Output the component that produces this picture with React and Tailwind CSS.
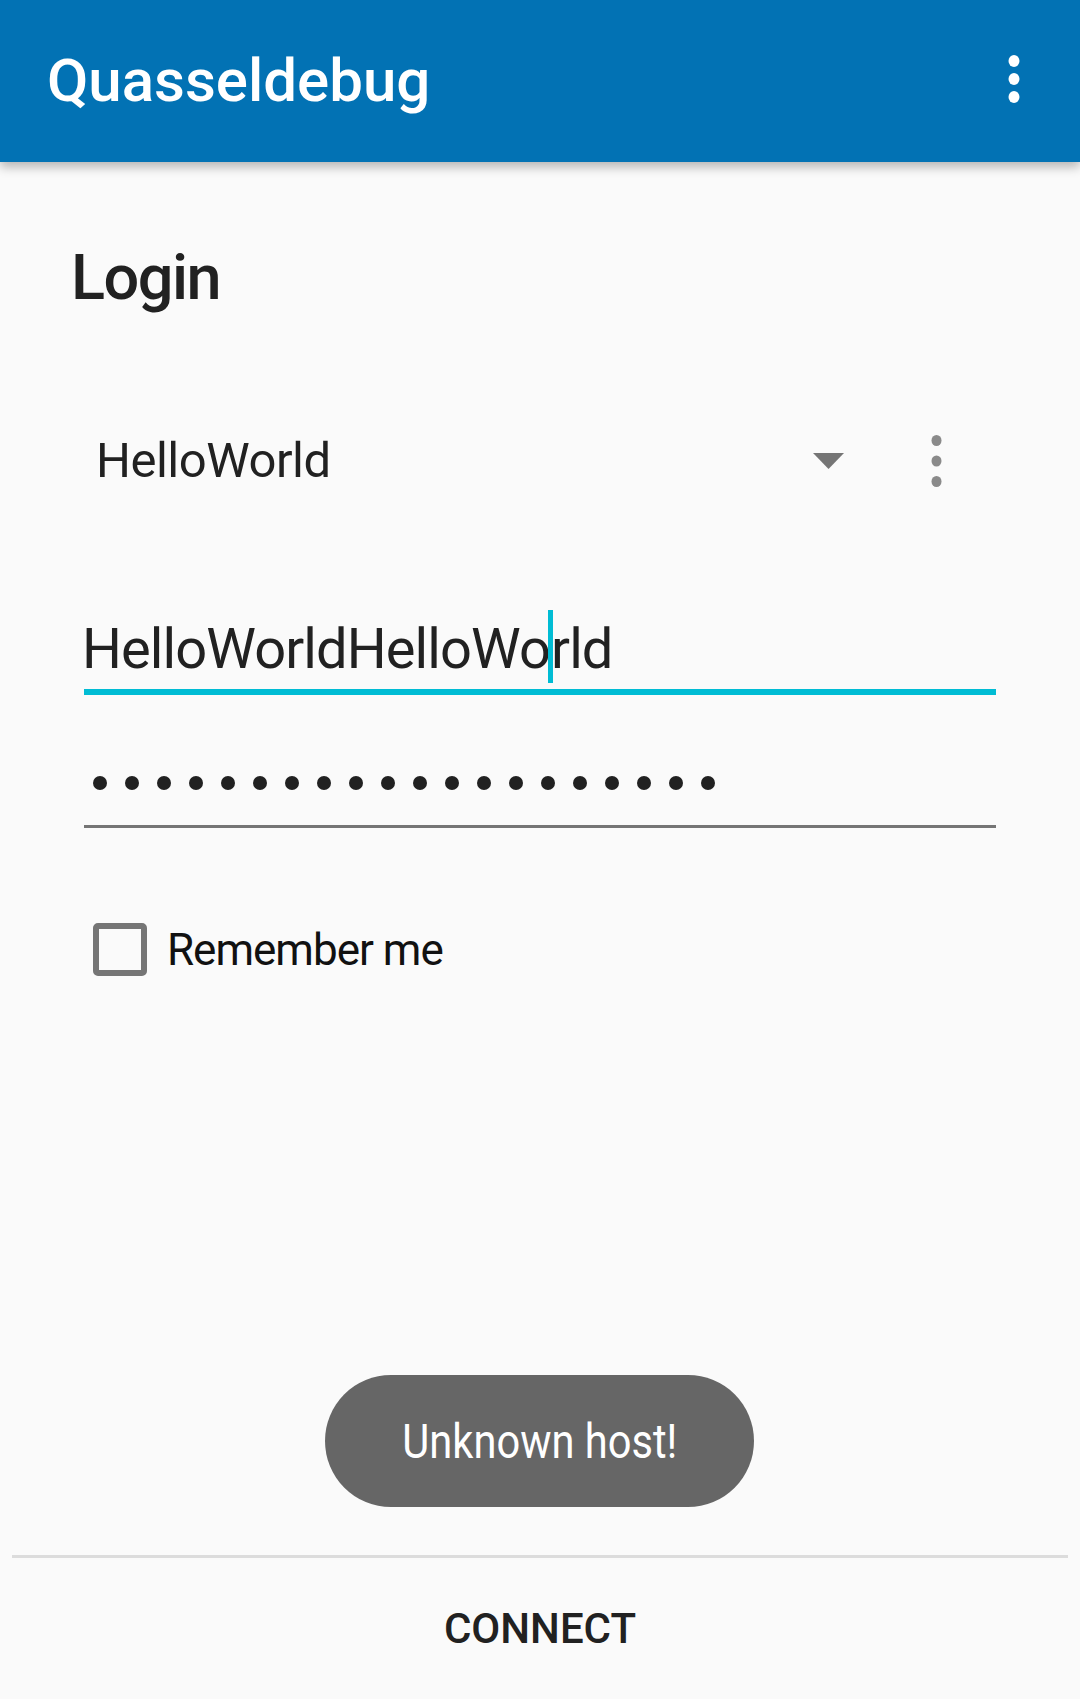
import React from "react";

function Kebab({ color, gap = 18, r = 6 }) {
  const h = r * 2 + gap * 2;
  return (
    <svg width={r * 2} height={h} viewBox={`0 0 ${r * 2} ${h}`} fill={color}>
      <ellipse cx={r} cy={r} rx={r - 0.5} ry={r} />
      <ellipse cx={r} cy={r + gap} rx={r - 0.5} ry={r} />
      <ellipse cx={r} cy={r + gap * 2} rx={r - 0.5} ry={r} />
    </svg>
  );
}

export default function App() {
  const dots = Array.from({ length: 20 });

  return (
    <div className="relative h-[1699px] w-[1080px] flex flex-col bg-[#fafafa] font-['Roboto','Liberation_Sans',sans-serif] overflow-hidden">
      {/* TOOLBAR */}
      <header className="relative z-10 h-[162px] shrink-0 flex items-center justify-between bg-[#0272b4] pl-[47px] pr-[60px] shadow-[0_5px_10px_rgba(0,0,0,0.28)]">
        <h1 className="text-[60px] leading-[162px] font-medium text-white">Quasseldebug</h1>
        <div className="-mt-[4px]">
          <Kebab color="#ffffff" />
        </div>
      </header>

      {/* LOGIN TITLE */}
      <h2 className="mt-[76px] h-[80px] pl-[71px] text-[63px] leading-[80px] font-medium tracking-[-1.5px] text-[#212121]">
        Login
      </h2>

      {/* ACCOUNT SPINNER */}
      <div className="mt-[93px] h-[100px] flex items-center pl-[96px] pr-[138px]">
        <span className="text-[49px] leading-[100px] tracking-[-0.5px] text-[#212121]">HelloWorld</span>
        <svg width="31" height="16" viewBox="0 0 31 16" className="ml-auto">
          <polygon points="0,0 31,0 15.5,16" fill="#757575" />
        </svg>
        <div className="ml-[87px]">
          <Kebab color="#8a8a8a" gap={20.5} r={5.5} />
        </div>
      </div>

      {/* USER FIELD */}
      <div className="mt-[99px] ml-[84px] w-[912px] border-b-[6px] border-[#00bcd4]">
        <div className="h-[79px] -ml-[2px] text-[56px] leading-[79px] tracking-[-0.9px] text-[#212121] whitespace-nowrap">
          HelloWorldHelloWo
          <span className="inline-block align-top w-[5px] h-[73px] bg-[#00bcd4] -mx-[2px]"></span>
          rld
        </div>
      </div>

      {/* PASSWORD FIELD */}
      <div className="mt-[45px] ml-[84px] w-[912px] h-[88px] border-b-[3px] border-[#757575] flex items-center pl-[9px] gap-[18px]">
        {dots.map((_, i) => (
          <span key={i} className="w-[14px] h-[14px] rounded-full bg-[#212121]"></span>
        ))}
      </div>

      {/* REMEMBER ME */}
      <label className="mt-[93px] flex items-center pl-[93px] gap-[20px]">
        <span className="w-[54px] h-[53px] rounded-[5px] border-[6px] border-[#757575]"></span>
        <span className="text-[44px] leading-[53px] mt-[3px] tracking-[-1px] text-[#111111]">Remember me</span>
      </label>

      {/* CONNECT */}
      <div className="mt-auto">
        <div className="mx-[12px] h-[3px] bg-[#dcdcdc]"></div>
        <button className="w-full h-[141px] text-[42px] leading-[141px] font-medium text-[#212121] text-center">
          CONNECT
        </button>
      </div>

      {/* TOAST */}
      <div className="absolute left-[325px] top-[1375px] w-[429px] h-[132px] rounded-full bg-[#666666] flex items-center justify-center">
        <span className="inline-block scale-x-[0.85] text-[49px] leading-none text-white">Unknown host!</span>
      </div>
    </div>
  );
}
